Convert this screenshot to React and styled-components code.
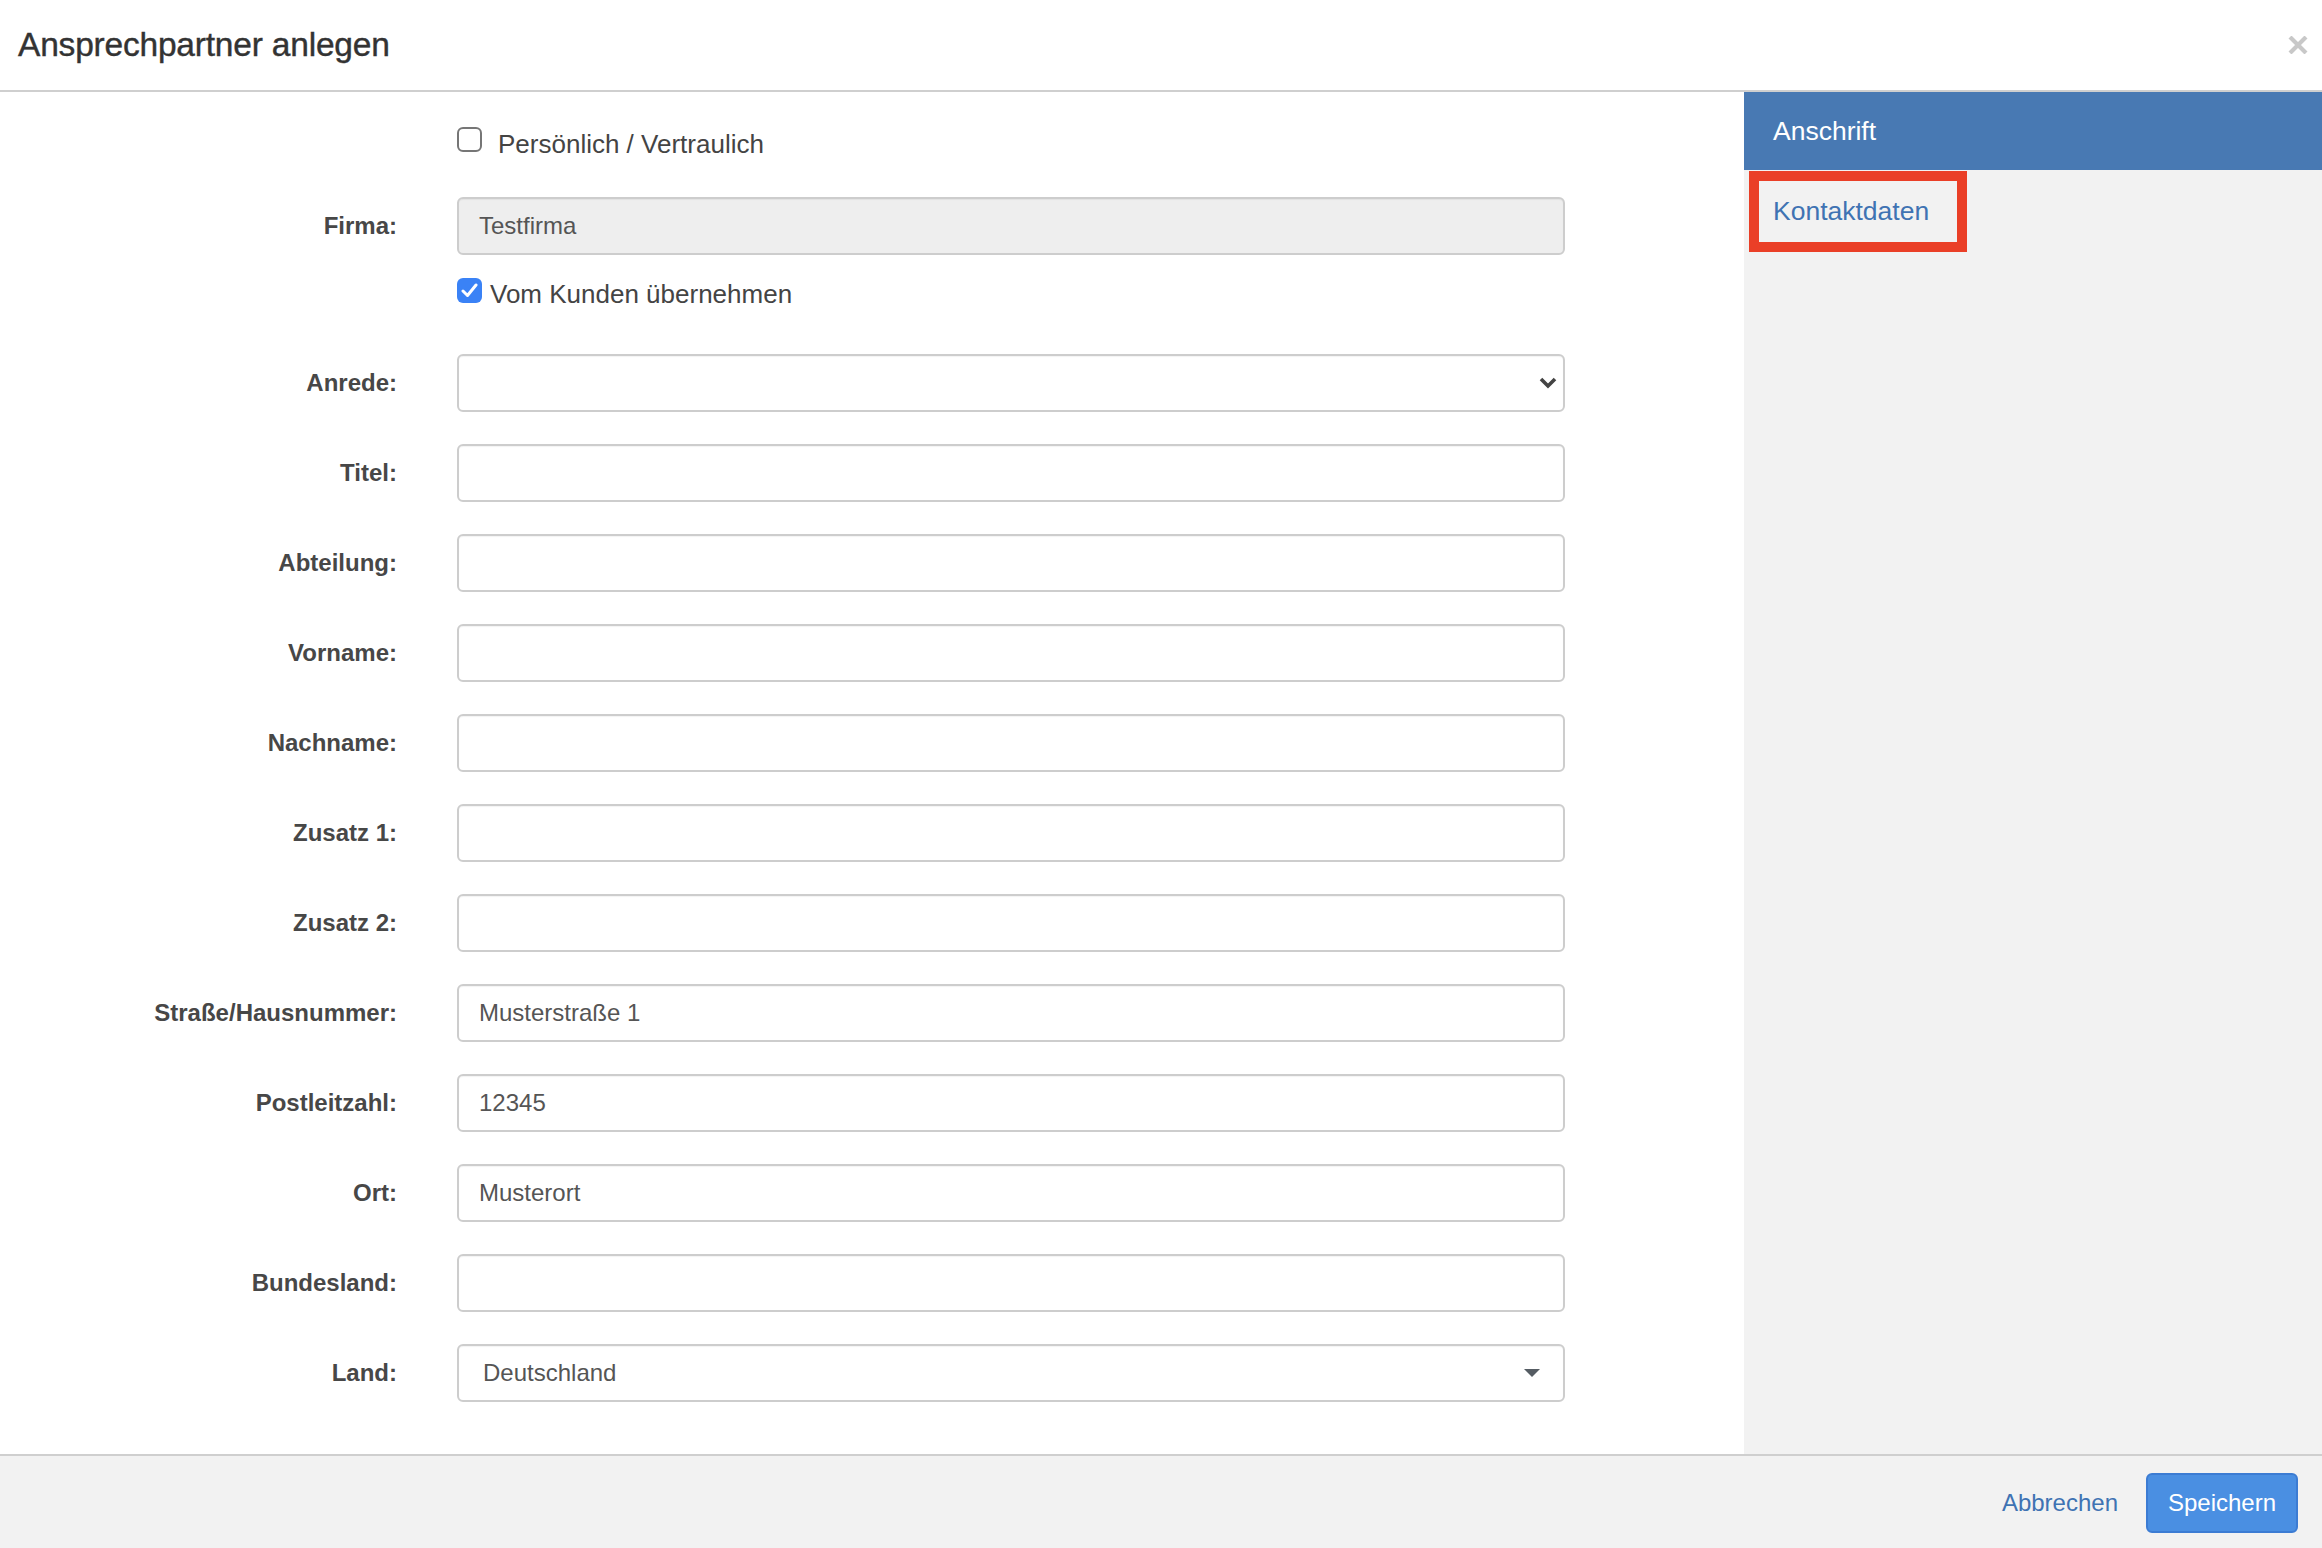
import React from "react";
import styled, { createGlobalStyle } from "styled-components";

const Global = createGlobalStyle`
  html, body { margin: 0; padding: 0; background: #fff; }
  body { font-family: "Liberation Sans", Arial, Helvetica, sans-serif; }
  * { box-sizing: border-box; }
`;

const Modal = styled.div`
  width: 2322px;
  height: 1548px;
  display: flex;
  flex-direction: column;
  background: #fff;
  overflow: hidden;
`;

const Header = styled.div`
  height: 92px;
  flex: none;
  display: flex;
  align-items: center;
  justify-content: space-between;
  padding: 0 13px 0 18px;
  border-bottom: 2px solid #cfcfcf;
`;

const Title = styled.h4`
  margin: 0;
  font-size: 33.5px;
  font-weight: 400;
  color: #333;
  letter-spacing: -0.2px;
  -webkit-text-stroke: 0.4px #333;
`;

const Close = styled.button`
  border: 0;
  background: none;
  padding: 0;
  width: 22px;
  height: 22px;
  display: flex;
  align-items: center;
  justify-content: center;
  cursor: pointer;
`;

const Body = styled.div`
  flex: 1;
  display: flex;
  min-height: 0;
`;

const FormArea = styled.div`
  flex: 1;
  padding-top: 35px;
  display: flex;
  flex-direction: column;
`;

const Row = styled.div`
  display: grid;
  grid-template-columns: 397px 1108px;
  column-gap: 60px;
  align-items: center;
  margin-top: ${(p) => p.$mt || 0}px;
`;

const Label = styled.label`
  text-align: right;
  font-size: 24px;
  font-weight: 700;
  color: #474747;
`;

const Input = styled.div`
  height: 58px;
  border: 2px solid #cdcdcd;
  border-radius: 6px;
  background: ${(p) => (p.$disabled ? "#eeeeee" : "#fff")};
  display: flex;
  align-items: center;
  justify-content: space-between;
  padding: 0 ${(p) => p.$pr ?? 20}px 0 ${(p) => p.$pl ?? 20}px;
  font-size: 24px;
  color: #555;
  box-shadow: inset 0 1px 1px rgba(0, 0, 0, 0.05);
`;

const CheckLine = styled.div`
  height: 25px;
  display: flex;
  align-items: flex-start;
  gap: ${(p) => p.$gap}px;
  font-size: 26px;
  color: #444;
`;

const CheckText = styled.span`
  line-height: 25px;
  margin-top: ${(p) => p.$shift}px;
  white-space: nowrap;
`;

const Box = styled.span`
  width: 25px;
  height: 25px;
  flex: none;
  border-radius: 6px;
  border: ${(p) => (p.$checked ? "none" : "2px solid #767676")};
  background: ${(p) => (p.$checked ? "#3a82f6" : "#fff")};
  display: flex;
  align-items: center;
  justify-content: center;
`;

const Sidebar = styled.div`
  width: 578px;
  flex: none;
  background: #f2f2f2;
  display: flex;
  flex-direction: column;
`;

const SideItem = styled.div`
  height: 78px;
  display: flex;
  align-items: center;
  padding-left: 29px;
  font-size: 26.5px;
  color: ${(p) => (p.$active ? "#fff" : "#3f73b3")};
  background: ${(p) => (p.$active ? "#4879b3" : "transparent")};
`;

const HighlightItem = styled.div`
  display: flex;
  padding: 1px 0 0 5px;
`;

const Marker = styled.span`
  border: 10px solid #ea3f27;
  height: 81px;
  width: 218px;
  display: flex;
  align-items: center;
  padding-left: 14px;
  font-size: 26.5px;
  color: #3f73b3;
`;

const Footer = styled.div`
  height: 94px;
  flex: none;
  border-top: 2px solid #cfcfcf;
  background: #f2f2f2;
  display: flex;
  align-items: center;
  justify-content: flex-end;
  padding: 2px 24px 0 0;
  gap: 14px;
`;

const LinkButton = styled.button`
  border: 0;
  background: none;
  font-family: inherit;
  font-size: 24px;
  color: #3f73b3;
  padding: 0 14px;
  height: 59px;
  cursor: pointer;
`;

const PrimaryButton = styled.button`
  height: 60px;
  width: 152px;
  border: 2px solid #3c7cd3;
  border-radius: 6px;
  background: #4a8fe2;
  color: #fff;
  font-family: inherit;
  font-size: 24px;
  cursor: pointer;
`;

const IconSlot = styled.span`
  display: flex;
  margin-right: ${(p) => p.$mr || 0}px;
`;

const Chevron = () => (
  <svg width="18" height="12" viewBox="0 0 18 12">
    <path d="M2 2 L9 9 L16 2" fill="none" stroke="#444" strokeWidth="3.6" />
  </svg>
);

const Caret = () => (
  <svg width="16" height="8" viewBox="0 0 16 8">
    <path d="M0 0 H16 L8 8 Z" fill="#555c63" />
  </svg>
);

const Check = () => (
  <svg width="17" height="15" viewBox="0 0 17 15">
    <path d="M2 8 L6.5 12.5 L15 2" fill="none" stroke="#fff" strokeWidth="3" strokeLinecap="round" strokeLinejoin="round" />
  </svg>
);

const CloseIcon = () => (
  <svg width="20" height="18" viewBox="0 0 20 18">
    <path d="M2 1 L18 17 M18 1 L2 17" stroke="#c8c8c8" strokeWidth="4.2" />
  </svg>
);

const fields = [
  { label: "Titel:" },
  { label: "Abteilung:" },
  { label: "Vorname:" },
  { label: "Nachname:" },
  { label: "Zusatz 1:" },
  { label: "Zusatz 2:" },
  { label: "Straße/Hausnummer:", value: "Musterstraße 1" },
  { label: "Postleitzahl:", value: "12345" },
  { label: "Ort:", value: "Musterort" },
  { label: "Bundesland:" },
];

export default function App() {
  return (
    <>
      <Global />
      <Modal>
        <Header>
          <Title>Ansprechpartner anlegen</Title>
          <Close aria-label="Schließen">
            <CloseIcon />
          </Close>
        </Header>
        <Body>
          <FormArea>
            <Row>
              <span />
              <CheckLine $gap={16}>
                <Box />
                <CheckText $shift={5}>Persönlich / Vertraulich</CheckText>
              </CheckLine>
            </Row>
            <Row $mt={45}>
              <Label>Firma:</Label>
              <Input $disabled>Testfirma</Input>
            </Row>
            <Row $mt={23}>
              <span />
              <CheckLine $gap={8}>
                <Box $checked>
                  <Check />
                </Box>
                <CheckText $shift={4}>Vom Kunden übernehmen</CheckText>
              </CheckLine>
            </Row>
            <Row $mt={51}>
              <Label>Anrede:</Label>
              <Input $pr={6}>
                <span />
                <Chevron />
              </Input>
            </Row>
            {fields.map((f) => (
              <Row key={f.label} $mt={32}>
                <Label>{f.label}</Label>
                <Input>{f.value || ""}</Input>
              </Row>
            ))}
            <Row $mt={32}>
              <Label>Land:</Label>
              <Input $pr={16} $pl={24}>
                <span>Deutschland</span>
                <IconSlot $mr={7}>
                  <Caret />
                </IconSlot>
              </Input>
            </Row>
          </FormArea>
          <Sidebar>
            <SideItem $active>Anschrift</SideItem>
            <HighlightItem>
              <Marker>Kontaktdaten</Marker>
            </HighlightItem>
          </Sidebar>
        </Body>
        <Footer>
          <LinkButton>Abbrechen</LinkButton>
          <PrimaryButton>Speichern</PrimaryButton>
        </Footer>
      </Modal>
    </>
  );
}
